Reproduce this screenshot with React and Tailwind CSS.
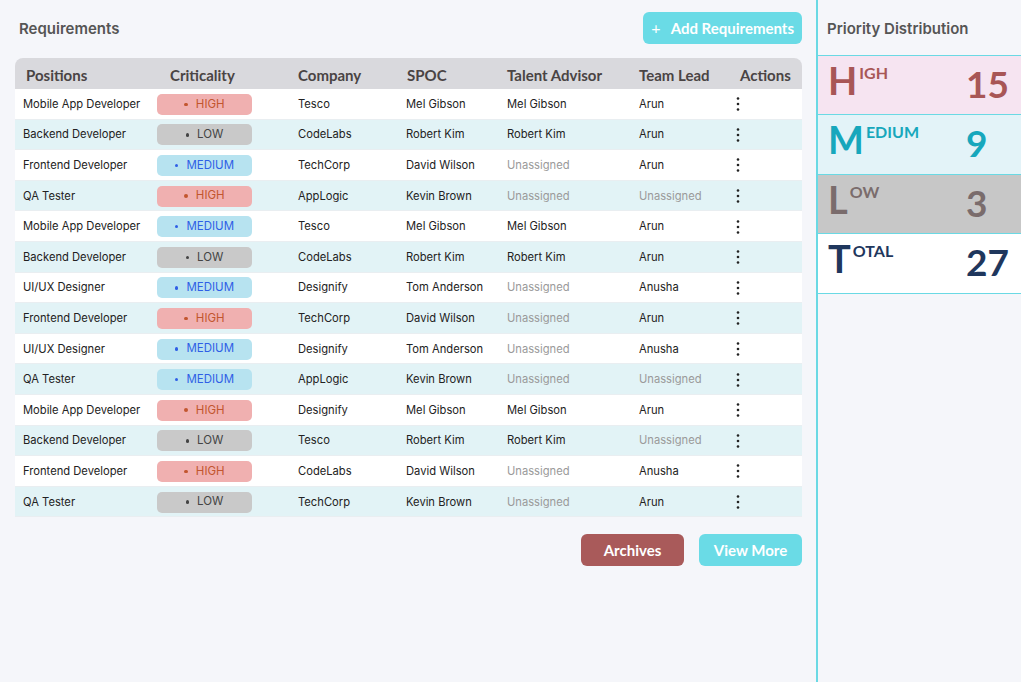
import React from 'react';

const rows = [
  ['Mobile App Developer', 'HIGH', 'Tesco', 'Mel Gibson', 'Mel Gibson', 'Arun'],
  ['Backend Developer', 'LOW', 'CodeLabs', 'Robert Kim', 'Robert Kim', 'Arun'],
  ['Frontend Developer', 'MEDIUM', 'TechCorp', 'David Wilson', null, 'Arun'],
  ['QA Tester', 'HIGH', 'AppLogic', 'Kevin Brown', null, null],
  ['Mobile App Developer', 'MEDIUM', 'Tesco', 'Mel Gibson', 'Mel Gibson', 'Arun'],
  ['Backend Developer', 'LOW', 'CodeLabs', 'Robert Kim', 'Robert Kim', 'Arun'],
  ['UI/UX Designer', 'MEDIUM', 'Designify', 'Tom Anderson', null, 'Anusha'],
  ['Frontend Developer', 'HIGH', 'TechCorp', 'David Wilson', null, 'Arun'],
  ['UI/UX Designer', 'MEDIUM', 'Designify', 'Tom Anderson', null, 'Anusha'],
  ['QA Tester', 'MEDIUM', 'AppLogic', 'Kevin Brown', null, null],
  ['Mobile App Developer', 'HIGH', 'Designify', 'Mel Gibson', 'Mel Gibson', 'Arun'],
  ['Backend Developer', 'LOW', 'Tesco', 'Robert Kim', 'Robert Kim', null],
  ['Frontend Developer', 'HIGH', 'CodeLabs', 'David Wilson', null, 'Anusha'],
  ['QA Tester', 'LOW', 'TechCorp', 'Kevin Brown', null, 'Arun'],
];

const badgeStyles = {
  HIGH: 'bg-[#f0b0b0] text-[#c2562f]',
  LOW: 'bg-[#c9c9c9] text-[#444]',
  MEDIUM: 'bg-[#b7e3f0] text-[#2f5fe6]',
};

const cols = 'grid grid-cols-[134px_141px_108px_101px_132px_98px_73px]';

function Person({ name }) {
  return name ? (
    <span className="text-[#222]">{name}</span>
  ) : (
    <span className="text-[#9a9a9a]">Unassigned</span>
  );
}

function Dots() {
  return (
    <svg width="4" height="16" viewBox="0 0 4 16" className="text-[#222]">
      <circle cx="2" cy="2.5" r="1.3" fill="currentColor" />
      <circle cx="2" cy="8" r="1.3" fill="currentColor" />
      <circle cx="2" cy="13.5" r="1.3" fill="currentColor" />
    </svg>
  );
}

const stats = [
  { first: 'H', rest: 'IGH', n: 15, bg: 'bg-[#f6e4f1]', color: 'text-[#a85656]' },
  { first: 'M', rest: 'EDIUM', n: 9, bg: 'bg-[#e3f3f8]', color: 'text-[#17a7bc]' },
  { first: 'L', rest: 'OW', n: 3, bg: 'bg-[#c7c7c7]', color: 'text-[#7a6c6c]' },
  { first: 'T', rest: 'OTAL', n: 27, bg: 'bg-white', color: 'text-[#1f375d]' },
];

export default function App() {
  return (
    <div className="flex h-[682px] w-full bg-[#f5f6fa] font-['Inter',sans-serif]">
      <main className="w-[816px] shrink-0 pl-[15px] pr-[14px]">
        <div className="flex h-[58px] items-start justify-between">
          <h1 className="mt-[18px] pl-1 text-[15px] font-semibold text-[#555]">Requirements</h1>
          <button className="mt-[12px] ml-[1px] flex h-[32px] items-center gap-[10px] whitespace-nowrap rounded-md bg-[#6adbe6] pl-[8px] pr-[8px] font-['Lato',sans-serif] text-[15px] font-bold text-white">
            <span className="text-[16px] font-normal">+</span>
            Add Requirements
          </button>
        </div>

        <div className="w-[787px]">
          <div className={`${cols} h-[31px] items-center rounded-t-lg bg-[#d9d9dd] pt-[3px] font-['Lato',sans-serif] text-[15px] font-bold text-[#4a4444]`}>
            <div className="pl-[11px]">Positions</div>
            <div className="pl-[21px]">Criticality</div>
            <div className="pl-[8px]">Company</div>
            <div className="pl-[9px]">SPOC</div>
            <div className="pl-[8px]">Talent Advisor</div>
            <div className="pl-[8px]">Team Lead</div>
            <div className="pl-[11px]">Actions</div>
          </div>
          {rows.map((r, i) => (
            <div
              key={i}
              className={`${cols} h-[30.6px] items-center border-b border-[#e9eef1] pt-[1px] text-[11.2px] text-[#222] ${i % 2 ? 'bg-[#e2f3f6]' : 'bg-white'}`}
            >
              <div className="pl-[8px]">{r[0]}</div>
              <div className="pl-[8px]">
                <span className={`flex h-[21px] w-[95px] items-center justify-center gap-[8px] rounded-[5px] text-[11.5px] ${badgeStyles[r[1]]}`}>
                  <span className="h-[3.5px] w-[3.5px] rounded-full bg-current" />
                  {r[1]}
                </span>
              </div>
              <div className="pl-[8px]">{r[2]}</div>
              <div className="pl-[8px]">{r[3]}</div>
              <div className="pl-[8px]"><Person name={r[4]} /></div>
              <div className="pl-[8px]"><Person name={r[5]} /></div>
              <div className="pl-[7px]"><Dots /></div>
            </div>
          ))}
        </div>

        <div className="mt-[17px] flex w-[787px] justify-end gap-[15px] font-['Lato',sans-serif] text-[15px] font-bold text-white">
          <button className="h-[32px] w-[103px] rounded-md bg-[#a95a5a]">Archives</button>
          <button className="h-[32px] w-[103px] rounded-md bg-[#6adbe6]">View More</button>
        </div>
      </main>

      <aside className="flex-1 border-l-2 border-[#6ad9e4]">
        <div className="flex h-[56px] items-start border-b border-[#6ad9e4] pl-[9px]">
          <h2 className="mt-[18px] text-[15px] font-semibold text-[#555]">Priority Distribution</h2>
        </div>
        {stats.map((s) => (
          <div
            key={s.first}
            className={`flex h-[59.4px] items-start border-b border-[#6ad9e4] font-['Lato',sans-serif] font-bold ${s.bg} ${s.color}`}
          >
            <div className="flex flex-1 items-start pl-[10px] pt-[1px]">
              <span className="text-[38px] leading-[46px]">{s.first}</span>
              <span className="ml-[2px] mt-[8px] text-[16px] leading-[16px]">{s.rest}</span>
            </div>
            <div className="w-[55px] pt-[5px] text-[37px] leading-[46px]">{s.n}</div>
          </div>
        ))}
      </aside>
    </div>
  );
}
